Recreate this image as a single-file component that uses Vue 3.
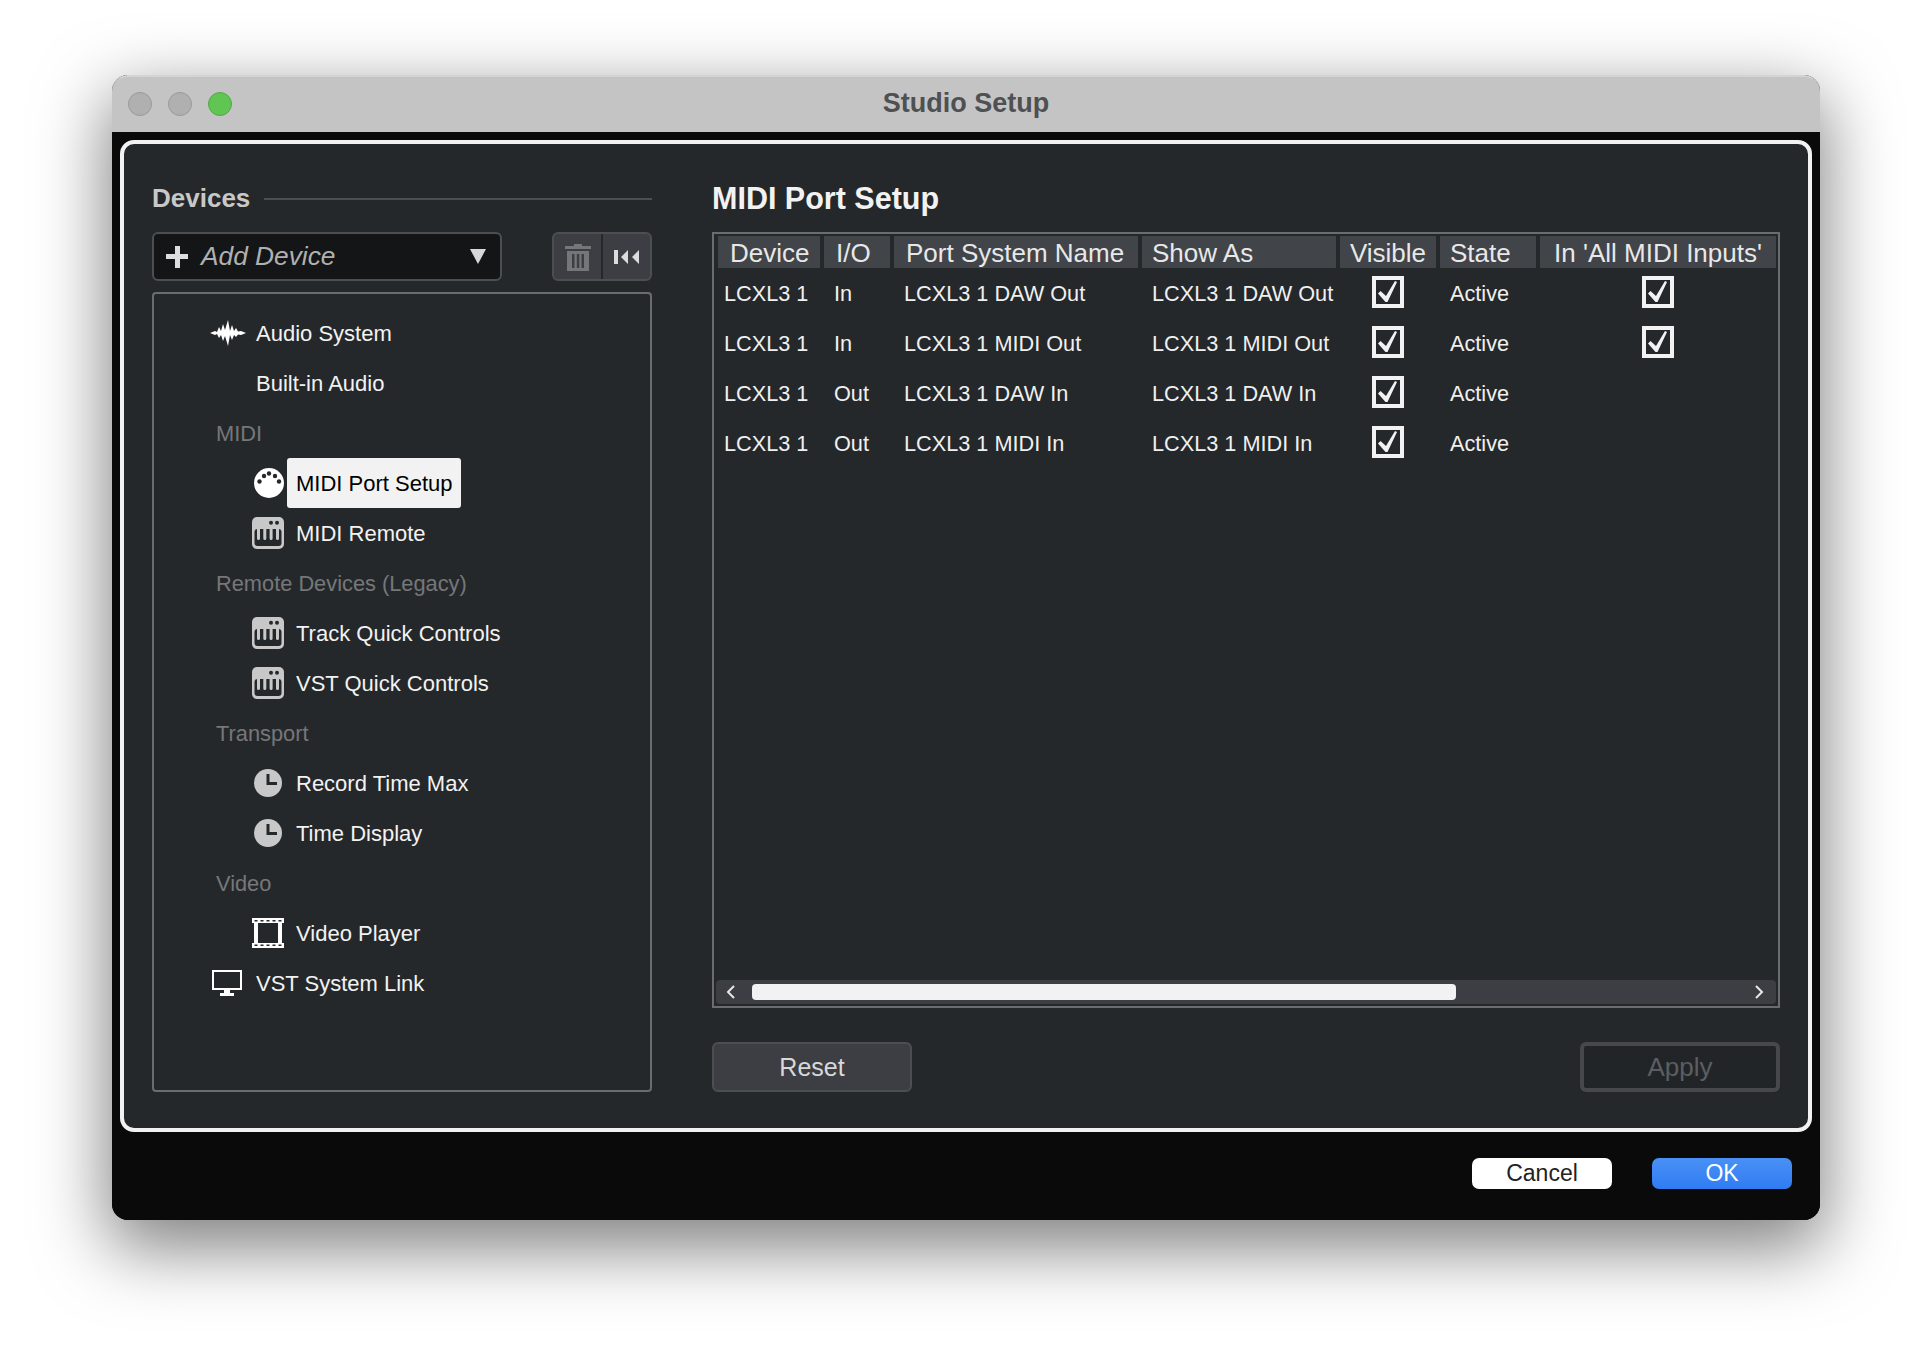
<template>
  <div class="desktop">
    <div class="window">
      <!-- Title bar -->
      <div class="titlebar">
        <div class="lights">
          <span class="light" />
          <span class="light" />
          <span class="light light-green" />
        </div>
        <span class="window-title">Studio Setup</span>
      </div>

      <div class="window-body">
        <div class="panel">
          <!-- Devices column -->
          <div class="devices">
            <div class="devices-head">
              <h2 class="devices-title">Devices</h2>
              <div class="devices-rule" />
            </div>

            <div class="toolbar">
              <div class="add-device">
                <span class="add-plus" />
                <span class="add-label">Add Device</span>
                <span class="add-arrow" />
              </div>
              <div class="tool-group">
                <button class="tool-btn">
                  <svg width="26" height="28" viewBox="0 0 26 28">
                    <path d="M9 3V1h8v2h9v3H0V3z" fill="#747679" />
                    <path d="M2 8h22v20H2zM7 11v14h2.500V11zM11.800 11v14h2.500V11zM16.500 11v14H19V11z" fill="#747679" fill-rule="evenodd" />
                  </svg>
                </button>
                <button class="tool-btn tool-btn-last">
                  <svg width="25" height="14" viewBox="0 0 25 14">
                    <path d="M0 0h4v14H0zM14 0v14L7 7zM25 0v14L18 7z" fill="#dcdcdc" />
                  </svg>
                </button>
              </div>
            </div>

            <div class="tree">
              <template
                v-for="item in tree"
                :key="item.label"
              >
                <div
                  v-if="item.type === 'section'"
                  class="tree-section"
                >
                  {{ item.label }}
                </div>
                <div
                  v-else
                  class="tree-row"
                  :class="item.type === 'top' ? 'tree-row-top' : 'tree-row-sub'"
                >
                  <span class="tree-icon">
                    <svg
                      v-if="item.icon === 'wave'"
                      width="36"
                      height="26"
                      viewBox="0 0 36 26"
                    >
                      <path d="M0 13L5 11l2 1 2-5 2 4 2-7 2 6 3-10 2 11 2-6 2 6 2-3 2 3.500 3-.5 5 2-5 2-3-.5-2 2.500-2-2-2 5-2-5-2 11-3-10-2 5-2-6-2 3-2-4-2 1z" fill="#fff" />
                    </svg>
                    <svg
                      v-else-if="item.icon === 'din'"
                      class="icon-din"
                      width="30"
                      height="30"
                      viewBox="0 0 30 30"
                    >
                      <circle cx="15" cy="15" r="15" fill="#fff" />
                      <circle cx="5.500" cy="13.500" r="2.200" fill="#25282b" />
                      <circle cx="10" cy="8" r="2.200" fill="#25282b" />
                      <circle cx="15" cy="5.500" r="2.200" fill="#25282b" />
                      <circle cx="21" cy="8" r="2.200" fill="#25282b" />
                      <circle cx="25" cy="13.500" r="2.200" fill="#25282b" />
                    </svg>
                    <svg
                      v-else-if="item.icon === 'keys'"
                      width="32"
                      height="32"
                      viewBox="0 0 32 32"
                    >
                      <rect width="32" height="32" rx="5" fill="#c8c8c8" />
                      <rect x="2.500" y="12" width="27" height="17" rx="3" fill="#25282b" />
                      <path d="M5 11h3v10.500a1.500 1.500 0 0 1-3 0zM11.300 11h3v10.500a1.500 1.500 0 0 1-3 0zM17.600 11h3v10.500a1.500 1.500 0 0 1-3 0zM24 11h3v10.500a1.500 1.500 0 0 1-3 0z" fill="#c8c8c8" />
                      <circle cx="19" cy="5.800" r="2" fill="#25282b" />
                      <circle cx="25" cy="5.800" r="2" fill="#25282b" />
                    </svg>
                    <svg
                      v-else-if="item.icon === 'clock'"
                      class="icon-clock"
                      width="28"
                      height="28"
                      viewBox="0 0 28 28"
                    >
                      <circle cx="14" cy="14" r="14" fill="#c8c8c8" />
                      <path d="M14 5v9.500h9" fill="none" stroke="#25282b" stroke-width="3" />
                    </svg>
                    <svg
                      v-else-if="item.icon === 'film'"
                      width="32"
                      height="30"
                      viewBox="0 0 32 30"
                    >
                      <path d="M0 0h32v5H0zM0 25h32v5H0zM2 5h4v20H2zM26 5h4v20h-4z" fill="#fff" />
                      <path d="M2.500 2h3v1.500h-3zM8.500 2h3v1.500h-3zM14.500 2h3v1.500h-3zM20.500 2h3v1.500h-3zM26.500 2h3v1.500h-3zM2.500 26.500h3V28h-3zM8.500 26.500h3V28h-3zM14.500 26.500h3V28h-3zM20.500 26.500h3V28h-3zM26.500 26.500h3V28h-3z" fill="#25282b" />
                    </svg>
                    <svg
                      v-else-if="item.icon === 'monitor'"
                      class="icon-monitor"
                      width="30"
                      height="26"
                      viewBox="0 0 30 26"
                    >
                      <rect x="1" y="1" width="28" height="18" fill="none" stroke="#fff" stroke-width="2" />
                      <path d="M12 20h6v3h4v3H8v-3h4z" fill="#fff" />
                    </svg>
                  </span>
                  <span
                    class="tree-label"
                    :class="{ 'tree-label-active': item.active }"
                  >{{ item.label }}</span>
                </div>
              </template>
            </div>
          </div>

          <!-- MIDI Port Setup column -->
          <div class="ports">
            <h2 class="ports-title">MIDI Port Setup</h2>

            <div class="port-table">
              <div class="port-head">
                <div
                  v-for="col in columns"
                  :key="col.label"
                  class="head-cell"
                  :class="{ 'head-center': col.center }"
                >
                  {{ col.label }}
                </div>
              </div>

              <div
                v-for="row in ports"
                :key="row.name"
                class="port-row"
              >
                <div class="cell cell-first">{{ row.device }}</div>
                <div class="cell">{{ row.io }}</div>
                <div class="cell">{{ row.name }}</div>
                <div class="cell">{{ row.name }}</div>
                <div class="cell cell-center">
                  <span class="check">
                    <svg width="24" height="24" viewBox="0 0 24 24">
                      <path d="M2 13.500L4.500 11 10 16 19 1l2 1-9.500 20h-2z" fill="#f2f2f2" />
                    </svg>
                  </span>
                </div>
                <div class="cell">Active</div>
                <div class="cell cell-center">
                  <span
                    v-if="row.allInputs"
                    class="check"
                  >
                    <svg width="24" height="24" viewBox="0 0 24 24">
                      <path d="M2 13.500L4.500 11 10 16 19 1l2 1-9.500 20h-2z" fill="#f2f2f2" />
                    </svg>
                  </span>
                </div>
              </div>

              <div class="scroll-track">
                <svg width="10" height="16" viewBox="0 0 10 16" class="scroll-left">
                  <path d="M8 2L2 8l6 6" fill="none" stroke="#e8e8e8" stroke-width="2" />
                </svg>
                <div class="scroll-thumb" />
                <svg width="10" height="16" viewBox="0 0 10 16" class="scroll-right">
                  <path d="M2 2l6 6-6 6" fill="none" stroke="#e8e8e8" stroke-width="2" />
                </svg>
              </div>
            </div>

            <div class="port-actions">
              <button class="btn-reset">Reset</button>
              <button class="btn-apply">Apply</button>
            </div>
          </div>
        </div>

        <!-- Footer -->
        <div class="footer">
          <button class="btn-cancel">Cancel</button>
          <button class="btn-ok">OK</button>
        </div>
      </div>
    </div>
  </div>
</template>

<script setup>
const tree = [
  { type: 'top', label: 'Audio System', icon: 'wave' },
  { type: 'top', label: 'Built-in Audio' },
  { type: 'section', label: 'MIDI' },
  { type: 'sub', label: 'MIDI Port Setup', icon: 'din', active: true },
  { type: 'sub', label: 'MIDI Remote', icon: 'keys' },
  { type: 'section', label: 'Remote Devices (Legacy)' },
  { type: 'sub', label: 'Track Quick Controls', icon: 'keys' },
  { type: 'sub', label: 'VST Quick Controls', icon: 'keys' },
  { type: 'section', label: 'Transport' },
  { type: 'sub', label: 'Record Time Max', icon: 'clock' },
  { type: 'sub', label: 'Time Display', icon: 'clock' },
  { type: 'section', label: 'Video' },
  { type: 'sub', label: 'Video Player', icon: 'film' },
  { type: 'top', label: 'VST System Link', icon: 'monitor' }
]

const columns = [
  { label: 'Device' },
  { label: 'I/O' },
  { label: 'Port System Name' },
  { label: 'Show As' },
  { label: 'Visible', center: true },
  { label: 'State' },
  { label: "In 'All MIDI Inputs'", center: true }
]

const ports = [
  { device: 'LCXL3 1', io: 'In', name: 'LCXL3 1 DAW Out', allInputs: true },
  { device: 'LCXL3 1', io: 'In', name: 'LCXL3 1 MIDI Out', allInputs: true },
  { device: 'LCXL3 1', io: 'Out', name: 'LCXL3 1 DAW In', allInputs: false },
  { device: 'LCXL3 1', io: 'Out', name: 'LCXL3 1 MIDI In', allInputs: false }
]
</script>

<style scoped>
.desktop {
  height: 1368px;
  padding: 75px 112px 0;
  box-sizing: border-box;
  background: #fff;
  overflow: hidden;
  font-family: "Liberation Sans", Arial, sans-serif;
}

.window {
  height: 1145px;
  display: flex;
  flex-direction: column;
  border-radius: 16px;
  box-shadow: 0 24px 70px 4px rgba(0, 0, 0, 0.5);
  background: #0a0a0a;
}

.titlebar {
  height: 57px;
  flex-shrink: 0;
  display: flex;
  align-items: center;
  justify-content: center;
  position: relative;
  padding-bottom: 2px;
  background: #c4c4c4;
  border-top: 2px solid #d4d4d4;
  box-sizing: border-box;
  border-radius: 16px 16px 0 0;
}

.lights {
  position: absolute;
  left: 16px;
  top: 15px;
  display: flex;
  gap: 16px;
}

.light {
  width: 24px;
  height: 24px;
  box-sizing: border-box;
  border-radius: 50%;
  background: #b0b0b0;
  border: 1px solid #999;
}

.light-green {
  background: #61c554;
  border-color: #52a846;
}

.window-title {
  font-size: 27px;
  font-weight: 700;
  color: #4f5052;
}

.window-body {
  flex: 1;
  display: flex;
  flex-direction: column;
  padding: 8px 8px 0;
  border-radius: 0 0 16px 16px;
  background: #0a0a0a;
}

.panel {
  height: 992px;
  box-sizing: border-box;
  display: flex;
  gap: 60px;
  padding: 36px 28px 0;
  background: #25282b;
  border: 4px solid #f2f2f2;
  border-radius: 14px;
}

/* Devices */
.devices {
  width: 500px;
  flex-shrink: 0;
}

.devices-head {
  height: 38px;
  display: flex;
  align-items: center;
  gap: 14px;
}

.devices-title {
  margin: -2px 0 0;
  font-size: 26px;
  font-weight: 700;
  color: #c8c8c8;
}

.devices-rule {
  flex: 1;
  height: 2px;
  background: #4c4f52;
}

.toolbar {
  margin-top: 14px;
  display: flex;
  justify-content: space-between;
}

.add-device {
  width: 350px;
  height: 49px;
  box-sizing: border-box;
  display: flex;
  align-items: center;
  padding: 0 14px 0 12px;
  background: #131517;
  border: 2px solid #4c4f52;
  border-radius: 6px;
}

.add-plus {
  width: 22px;
  height: 22px;
  flex-shrink: 0;
  background:
    linear-gradient(#ddd, #ddd) center / 22px 5px no-repeat,
    linear-gradient(#ddd, #ddd) center / 5px 22px no-repeat;
}

.add-label {
  margin-left: 13px;
  flex: 1;
  font-size: 26.300px;
  font-style: italic;
  color: #b0b0b0;
}

.add-arrow {
  width: 0;
  height: 0;
  border-left: 8px solid transparent;
  border-right: 8px solid transparent;
  border-top: 15px solid #d8d8d8;
}

.tool-group {
  width: 100px;
  height: 49px;
  box-sizing: border-box;
  display: flex;
  background: #3c3e43;
  border: 2px solid #4c4f52;
  border-radius: 6px;
}

.tool-btn {
  flex: 1;
  padding: 0;
  display: flex;
  align-items: center;
  justify-content: center;
  background: none;
  border: none;
}

.tool-btn-last {
  border-left: 2px solid #25282b;
}

.tree {
  margin-top: 11px;
  height: 800px;
  box-sizing: border-box;
  padding-top: 14px;
  border: 2px solid #6a6c6e;
  border-radius: 4px;
}

.tree-section {
  height: 50px;
  line-height: 51px;
  padding-left: 62px;
  font-size: 21.800px;
  color: #757779;
}

.tree-row {
  height: 50px;
  display: flex;
  align-items: center;
  font-size: 22px;
  color: #f2f2f2;
}

.tree-row-top {
  padding-left: 56px;
}

.tree-row-top .tree-icon {
  width: 46px;
}

.tree-row-sub {
  padding-left: 98px;
}

.tree-row-sub .tree-icon {
  width: 44px;
}

.tree-icon {
  flex-shrink: 0;
  display: flex;
  align-items: center;
}

.icon-din,
.icon-clock,
.icon-monitor {
  margin-left: 2px;
}

.tree-label {
  padding-top: 1px;
}

.tree-label-active {
  margin-left: -9px;
  height: 50px;
  box-sizing: border-box;
  line-height: 49px;
  padding: 1px 8px 0 9px;
  background: #f2f2f2;
  border-radius: 3px;
  color: #000;
}

/* Ports */
.ports {
  flex: 1;
  min-width: 0;
}

.ports-title {
  margin: 0;
  height: 38px;
  line-height: 36px;
  font-size: 30.500px;
  font-weight: 700;
  color: #f2f2f2;
}

.port-table {
  margin-top: 14px;
  height: 776px;
  box-sizing: border-box;
  padding: 2px;
  display: flex;
  flex-direction: column;
  border: 2px solid #6a6c6e;
}

.port-head,
.port-row {
  display: grid;
  grid-template-columns: 102px 66px 244px 194px 96px 96px 236px;
  column-gap: 4px;
  margin-left: 2px;
}

.port-head {
  height: 32px;
}

.head-cell {
  padding-left: 12px;
  height: 32px;
  line-height: 34px;
  font-size: 26px;
  white-space: nowrap;
  background: #414448;
  color: #e8e8e8;
}

.head-cell:nth-child(4),
.head-cell:nth-child(6) {
  padding-left: 10px;
}

.head-center {
  padding-left: 0;
  text-align: center;
}

.port-row {
  height: 50px;
}

.cell {
  display: flex;
  align-items: center;
  padding: 2px 0 0 10px;
  font-size: 21.700px;
  white-space: nowrap;
  color: #f0f0f0;
}

.cell-first {
  padding-left: 6px;
}

.cell-center {
  padding: 0 0 2px;
  justify-content: center;
}

.check {
  width: 32px;
  height: 32px;
  box-sizing: border-box;
  display: flex;
  align-items: center;
  justify-content: center;
  border: 4px solid #f2f2f2;
}

.scroll-track {
  margin-top: auto;
  height: 24px;
  position: relative;
  display: flex;
  align-items: center;
  background: #3c3e43;
  border-radius: 4px;
}

.scroll-left {
  position: absolute;
  left: 10px;
  top: 4px;
}

.scroll-right {
  position: absolute;
  right: 12px;
  top: 4px;
}

.scroll-thumb {
  margin-left: 36px;
  width: 704px;
  height: 16px;
  background: #f2f2f2;
  border-radius: 4px;
}

.port-actions {
  margin-top: 34px;
  display: flex;
  justify-content: space-between;
}

.btn-reset,
.btn-apply {
  width: 200px;
  height: 50px;
  box-sizing: border-box;
  padding: 0;
  font-family: inherit;
  font-size: 25px;
  border-radius: 6px;
}

.btn-reset {
  background: #3c3e43;
  border: 2px solid #4c4f52;
  color: #d8d8d8;
}

.btn-apply {
  font-size: 26px;
  background: #222528;
  border: 4px solid #46484b;
  color: #5c5e61;
}

/* Footer */
.footer {
  margin-top: 26px;
  padding-right: 20px;
  display: flex;
  justify-content: flex-end;
  gap: 40px;
}

.btn-cancel,
.btn-ok {
  width: 140px;
  height: 31px;
  padding: 0;
  font-family: inherit;
  font-size: 23px;
  border: none;
  border-radius: 7px;
}

.btn-cancel {
  background: #fff;
  color: #222;
}

.btn-ok {
  background: linear-gradient(#4a90f5, #2f7cf3);
  color: #fff;
}
</style>

<style>
html,
body {
  margin: 0;
  background: #fff;
}
</style>
